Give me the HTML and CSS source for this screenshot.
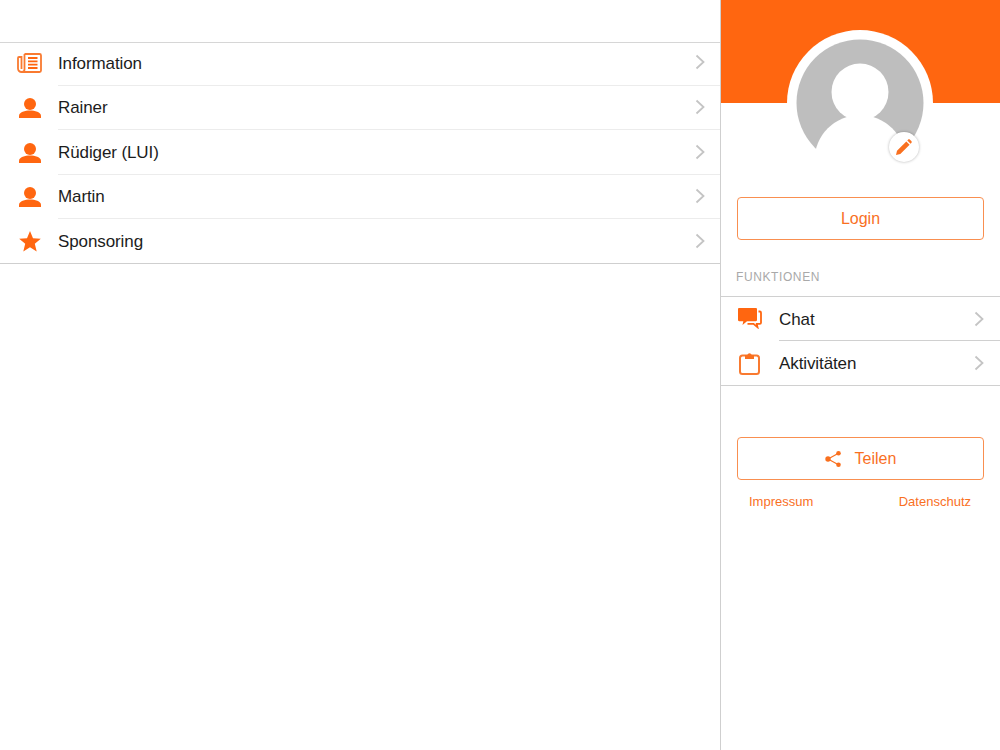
FILE: index.html
```html
<!DOCTYPE html>
<html lang="de">
<head>
<meta charset="utf-8">
<title>Menü</title>
<link rel="stylesheet" href="styles.css">
</head>
<body>
<svg class="defs" width="0" height="0" aria-hidden="true">
  <symbol id="chev" viewBox="0 0 10 16"><path d="M1.500 1.500 8.500 8l-7 6.500" fill="none" stroke="#c4c4c4" stroke-width="1.800"/></symbol>
  <symbol id="person" viewBox="0 0 22 20"><circle cx="11" cy="6" r="6" fill="#ff6610"/><path d="M0 20v-2.300C0 14.300 6.200 12.500 11 12.500s11 1.800 11 5.200V20z" fill="#ff6610"/></symbol>
</svg>
<main class="main">
  <ul class="list">
    <li class="row">
      <span class="ico ico-i"><svg width="25" height="20" viewBox="0 0 25 20" fill="none" stroke="#f97a30" stroke-width="1.800"><path d="M7.500 1h15c.8 0 1.500.7 1.500 1.500v15c0 .8-.7 1.500-1.500 1.500H4.500"/><path d="M7.500 1v15.500c0 1.500-1.200 2.500-3 2.500C2.500 19 1 17.500 1 15.500V5c0-.6.400-1 1-1h2.500v12"/><path d="M11 5h9.500M11 8.300h9.500M11 11.600h9.500M11 15h9.500" stroke="#ff6610" stroke-width="1.800"/></svg></span>
      <span class="label">Information</span><svg class="chev"><use href="#chev"/></svg>
    </li>
    <li class="row">
      <span class="ico ico-p"><svg width="22" height="20"><use href="#person"/></svg></span>
      <span class="label">Rainer</span><svg class="chev"><use href="#chev"/></svg>
    </li>
    <li class="row">
      <span class="ico ico-p"><svg width="22" height="20"><use href="#person"/></svg></span>
      <span class="label">Rüdiger (LUI)</span><svg class="chev"><use href="#chev"/></svg>
    </li>
    <li class="row">
      <span class="ico ico-p"><svg width="22" height="20"><use href="#person"/></svg></span>
      <span class="label">Martin</span><svg class="chev"><use href="#chev"/></svg>
    </li>
    <li class="row">
      <span class="ico ico-p"><svg width="22" height="21" viewBox="0 0 22 21"><path d="M11 0l3 7.300 7.800.5-6 5 1.900 7.700-6.700-4.200-6.700 4.200 1.900-7.700-6-5L8 7.300z" fill="#ff6610"/></svg></span>
      <span class="label">Sponsoring</span><svg class="chev"><use href="#chev"/></svg>
    </li>
  </ul>
</main>
<aside class="side">
  <header class="hero">
    <div class="avatar">
      <svg width="146" height="146" viewBox="0 0 146 146"><circle cx="73" cy="73" r="73" fill="#fff"/><circle cx="73" cy="73" r="63.500" fill="#bebebe"/><circle cx="73" cy="62" r="28.500" fill="#fff"/><circle cx="73" cy="130.500" r="45.500" fill="#fff"/></svg>
      <span class="edit"><svg width="16" height="16" viewBox="0 0 16 16"><path d="M0 16l1-4.300L10.300 2.400l3.300 3.300L4.300 15zM11.300 1.400l.7-.7c.6-.6 1.400-.6 2 0l1.300 1.300c.6.600.6 1.400 0 2l-.7.7z" fill="#f9701f"/></svg></span>
    </div>
  </header>
  <div class="pad login"><a class="btn">Login</a></div>
  <h2 class="heading">FUNKTIONEN</h2>
  <ul class="fn">
    <li class="fn-row">
      <span class="fn-ico"><svg width="24" height="21" viewBox="0 0 24 21"><path d="M1.200 0h16.600c.7 0 1.200.5 1.200 1.200v10.900c0 .7-.5 1.200-1.200 1.200H9l-4.500 3.700.8-3.700H1.200C.5 13.300 0 12.800 0 12.100V1.200C0 .5.500 0 1.200 0z" fill="#ff6610"/><path d="M20.500 3.500h1.300c.7 0 1.200.5 1.200 1.200v10c0 .7-.5 1.200-1.200 1.200h-3l.7 3.300-4-3.300H9.500" fill="none" stroke="#ff6610" stroke-width="1.800"/></svg></span>
      <span class="label">Chat</span><svg class="chev"><use href="#chev"/></svg>
    </li>
    <li class="fn-row">
      <span class="fn-ico fn-clip"><svg width="21" height="23" viewBox="0 0 21 23" fill="none"><rect x="1" y="3.500" width="19" height="18.500" rx="2.500" stroke="#f97a30" stroke-width="2"/><path d="M6 3h2.300a2.300 2.300 0 0 1 4.400 0H15v4H6z" fill="#f9701f"/></svg></span>
      <span class="label">Aktivitäten</span><svg class="chev"><use href="#chev"/></svg>
    </li>
  </ul>
  <div class="pad share">
    <a class="btn">
      <svg width="16" height="16" viewBox="0 0 16 16" fill="#f9701f"><circle cx="3" cy="8" r="2.700"/><circle cx="13.500" cy="2.300" r="2.300"/><circle cx="13.500" cy="13.700" r="2.300"/><path d="M3 8 13.500 2.300M3 8l10.500 5.700" stroke="#f9701f" stroke-width="1.300"/></svg>
      <span>Teilen</span>
    </a>
  </div>
  <nav class="links"><a>Impressum</a><a>Datenschutz</a></nav>
</aside>
</body>
</html>
```
FILE: styles.css
```css
* { box-sizing: border-box; }
html, body { margin: 0; height: 100%; }
body {
  display: flex;
  width: 1000px;
  height: 750px;
  overflow: hidden;
  background: #fff;
  font-family: "Liberation Sans", Arial, sans-serif;
  color: #1c1c1c;
}
.defs { position: absolute; }
.main { width: 720px; padding-top: 42px; }
.list {
  list-style: none;
  margin: 0;
  padding: 0;
  border-top: 1px solid #d6d6d6;
  border-bottom: 1px solid #cfcfcf;
}
.row {
  position: relative;
  display: flex;
  align-items: center;
  height: 44px;
  padding: 2px 15px 0 17px;
}
.row:first-child { height: 42px; padding-top: 0; }
.row:first-child .chev { margin-bottom: 4px; }
.row:nth-child(3), .row:nth-child(5) { height: 45px; }
.row + .row::before {
  content: "";
  position: absolute;
  left: 58px;
  right: 0;
  top: 0;
  height: 1px;
  background: #ececec;
}
.ico { width: 41px; display: flex; align-items: center; }
.ico-i { margin-bottom: 2px; }
.ico-p { padding-left: 2px; }
.ico svg { display: block; }
.label { flex: 1; font-size: 17px; line-height: 20px; letter-spacing: -.1px; }
.chev { width: 10px; height: 16px; flex: none; margin-bottom: 2px; }
.side {
  position: relative;
  width: 280px;
  height: 750px;
  border-left: 1px solid #cfcfcf;
}
.hero { height: 103px; background: #ff6610; display: flex; justify-content: center; }
.avatar { position: relative; width: 146px; height: 146px; margin: 30px 1px 0 0; flex: none; }
.avatar > svg { display: block; }
.edit {
  position: absolute;
  left: 102px;
  top: 102px;
  width: 30px;
  height: 30px;
  border-radius: 50%;
  background: #fff;
  box-shadow: 0 0 3px rgba(0, 0, 0, .3);
  display: flex;
  align-items: center;
  justify-content: center;
}
.pad { padding: 0 16px 0 16px; }
.login { margin-top: 94px; }
.btn {
  display: flex;
  align-items: center;
  justify-content: center;
  gap: 14px;
  height: 43px;
  border: 1px solid #f98f50;
  border-radius: 4px;
  color: #f9701f;
  font-size: 16px;
}
.heading {
  margin: 30px 0 0 15px;
  height: 26px;
  font-size: 12px;
  line-height: 14px;
  font-weight: 400;
  letter-spacing: .6px;
  color: #a9a9a9;
}
.fn {
  list-style: none;
  margin: 0;
  padding: 0;
  border-top: 1px solid #d0d0d0;
  border-bottom: 1px solid #d0d0d0;
}
.fn-row {
  position: relative;
  display: flex;
  align-items: center;
  height: 44px;
  padding: 2px 16px 0 17px;
}
.fn-row + .fn-row::before {
  content: "";
  position: absolute;
  left: 58px;
  right: 0;
  top: -1px;
  height: 1px;
  background: #d0d0d0;
}
.fn-ico { width: 41px; display: flex; align-items: center; margin-bottom: 3px; }
.fn-clip { margin-bottom: 1px; padding-left: 1px; }
.fn-ico svg { display: block; }
.share { margin-top: 51px; }
.links {
  display: flex;
  justify-content: space-between;
  padding: 0 29px 0 28px;
  margin-top: 14px;
  font-size: 13px;
  color: #f9701f;
}
```
